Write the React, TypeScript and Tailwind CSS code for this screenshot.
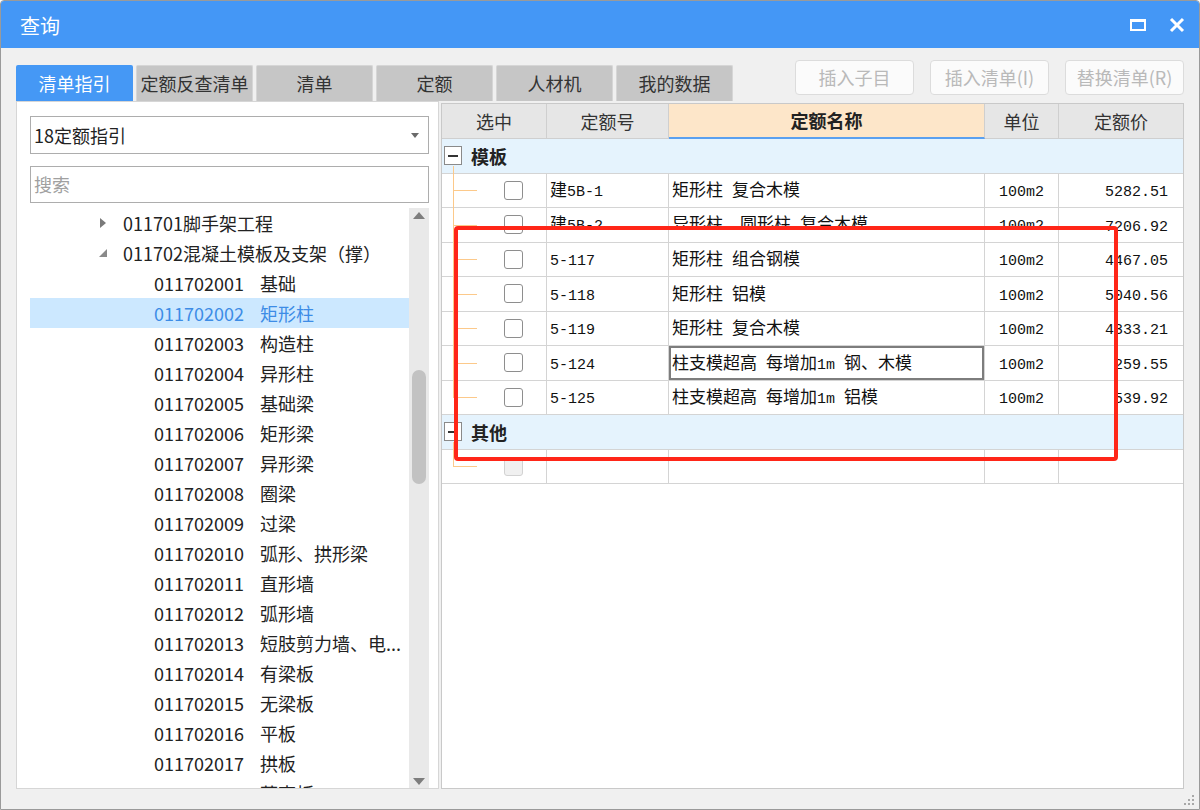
import React from 'react'

// 查询 dialog: 清单指引 tree on the left, 定额 table on the right

const tabs = ['清单指引', '定额反查清单', '清单', '定额', '人材机', '我的数据']

const children = [
  ['011702001', '基础'],
  ['011702002', '矩形柱'],
  ['011702003', '构造柱'],
  ['011702004', '异形柱'],
  ['011702005', '基础梁'],
  ['011702006', '矩形梁'],
  ['011702007', '异形梁'],
  ['011702008', '圈梁'],
  ['011702009', '过梁'],
  ['011702010', '弧形、拱形梁'],
  ['011702011', '直形墙'],
  ['011702012', '弧形墙'],
  ['011702013', '短肢剪力墙、电...'],
  ['011702014', '有梁板'],
  ['011702015', '无梁板'],
  ['011702016', '平板'],
  ['011702017', '拱板'],
  ['011702018', '薄壳板'],
]

type Row = { code: string; name: string; unit: string; price: string; clip?: boolean; focus?: boolean }

const rows: Row[] = [
  { code: '建5B-1', name: '矩形柱 复合木模', unit: '100m2', price: '5282.51' },
  { code: '建5B-2', name: '异形柱、圆形柱 复合木模', unit: '100m2', price: '7206.92', clip: true },
  { code: '5-117', name: '矩形柱 组合钢模', unit: '100m2', price: '4467.05' },
  { code: '5-118', name: '矩形柱 铝模', unit: '100m2', price: '5040.56' },
  { code: '5-119', name: '矩形柱 复合木模', unit: '100m2', price: '4333.21' },
  { code: '5-124', name: '柱支模超高 每增加1m 钢、木模', unit: '100m2', price: '259.55', focus: true },
  { code: '5-125', name: '柱支模超高 每增加1m 铝模', unit: '100m2', price: '539.92' },
]

const cols = 'grid grid-cols-[105px_122px_316px_74px_1fr]'

// SimSun-like cell text: half-width ascii runs in mono, CJK in sans
function Mixed({ text }: { text: string }) {
  const parts = text.split(/([\x20-\x7e]+)/).filter(Boolean)
  return (
    <span className="whitespace-pre">
      {parts.map((p, i) =>
        /^[\x20-\x7e]+$/.test(p) ? (
          <span key={i} className="font-['Liberation_Mono',monospace] text-[15px]">{p}</span>
        ) : (
          <span key={i}>{p}</span>
        )
      )}
    </span>
  )
}

// row 2 is half hidden under the annotation box in the original
function Clip({ on, children }: { on?: boolean; children: React.ReactNode }) {
  if (!on) return <>{children}</>
  return <span className="block h-[17px] overflow-hidden leading-[19px] self-start mt-[5px]">{children}</span>
}

function Checkbox({ disabled }: { disabled?: boolean }) {
  return (
    <span
      className={
        disabled
          ? 'block w-[19px] h-[19px] rounded-[3px] border border-[#d2d2d2] bg-[#f0f0f0]'
          : 'block w-[19px] h-[19px] rounded-[3px] border border-[#8e8e8e] bg-white'
      }
    />
  )
}

function Connector({ last }: { last?: boolean }) {
  return (
    <>
      <span className={`absolute left-[11px] top-0 w-px bg-[#fcc98a] ${last ? 'h-1/2' : 'h-[calc(100%+1px)]'}`} />
      <span className="absolute left-[11px] top-1/2 w-[24px] h-px bg-[#fcc98a]" />
    </>
  )
}

function GroupRow({ label }: { label: string }) {
  return (
    <div className="relative h-[34.5px] shrink-0 flex items-center bg-[#e5f3fd] border-b border-[#d4d4d4]">
      <span className="ml-[2px] w-[18px] h-[19px] border border-[#8a8a8a] bg-white flex items-center justify-center">
        <span className="w-[10px] h-[2px] bg-[#333]" />
      </span>
      <span className="absolute left-[11px] top-[27px] bottom-[-1px] w-px bg-[#fcc98a]" />
      <span className="ml-[9px] text-[18px] font-bold text-[#222] leading-none">{label}</span>
    </div>
  )
}

function DataRow({ r, last }: { r: Row; last?: boolean }) {
  const cell = 'h-full flex items-center border-r border-b border-[#d4d4d4]'
  return (
    <div className={`${cols} h-[34.5px] shrink-0 text-[17px] text-[#111]`}>
      <div className={`${cell} relative pl-[62px]`}>
        <Connector last={last} />
        <Checkbox />
      </div>
      <div className={`${cell} pl-[3px]`}>
        <Clip on={r.clip}><Mixed text={r.code} /></Clip>
      </div>
      <div className={`${cell} pl-[3px] ${r.focus ? 'shadow-[inset_0_0_0_2px_#7d7d7d]' : ''}`}>
        <Clip on={r.clip}><Mixed text={r.name} /></Clip>
      </div>
      <div className={`${cell} pl-[14px]`}>
        <Clip on={r.clip}><Mixed text={r.unit} /></Clip>
      </div>
      <div className="h-full flex items-center justify-end pr-[15px] border-b border-[#d4d4d4]">
        <Mixed text={r.price} />
      </div>
    </div>
  )
}

function TreePanel() {
  return (
    <div className="w-[423px] h-full min-h-0 bg-white border border-[#d6d6d6] pl-[13px] pr-[9px] pt-[14px] flex flex-col">
      <div className="h-[38px] shrink-0 border border-[#adadad] flex items-center justify-between pl-[3px] pr-[9px]">
        <span className="text-[18px] text-[#222]">18定额指引</span>
        <svg width="8" height="5" viewBox="0 0 8 5"><path d="M0 0h8L4 5z" fill="#6a6a6a" /></svg>
      </div>
      <div className="mt-[12px] h-[37px] shrink-0 border border-[#adadad] flex items-center pl-[3px]">
        <span className="text-[18px] text-[#a0a0a0]">搜索</span>
      </div>
      <div className="mt-[5px] flex-1 min-h-0 flex overflow-hidden">
        <div className="flex-1 overflow-hidden text-[18px] text-[#222]">
          <div className="h-[30px] flex items-center">
            <svg className="ml-[70px] w-[6px] h-[10px]" viewBox="0 0 6 10"><path d="M0 0l6 5-6 5z" fill="#7a7a7a" /></svg>
            <span className="ml-[17px]">011701脚手架工程</span>
          </div>
          <div className="h-[30px] flex items-center">
            <svg className="ml-[69px] w-[8px] h-[8px]" viewBox="0 0 8 8"><path d="M8 0v8H0z" fill="#8a8a8a" /></svg>
            <span className="ml-[16px]">011702混凝土模板及支架（撑）</span>
          </div>
          {children.map(([code, name]) => {
            const sel = code === '011702002'
            return (
              <div key={code} className={`h-[30px] flex items-center pl-[124px] whitespace-nowrap ${sel ? 'bg-[#cce8ff] text-[#3d8ce6]' : ''}`}>
                <span className="w-[106px]">{code}</span>
                <span>{name}</span>
              </div>
            )
          })}
        </div>
        <div className="w-[20px] bg-[#e9e9e9] flex flex-col items-center">
          <svg className="mt-[4px] w-[12px] h-[7px]" viewBox="0 0 12 7"><path d="M6 0l6 7H0z" fill="#7d7d7d" /></svg>
          <span className="mt-[151px] w-[14px] h-[114px] rounded-full bg-[#c2c2c2]" />
          <svg className="mt-auto mb-[3px] w-[12px] h-[7px]" viewBox="0 0 12 7"><path d="M0 0h12L6 7z" fill="#7d7d7d" /></svg>
        </div>
      </div>
    </div>
  )
}

function QuotaTable() {
  const head = 'h-full flex items-center justify-center border-r border-b border-[#cfcfcf] bg-[#e6e6e6] text-[#333]'
  return (
    <div className="mt-[2px] w-[743px] h-[686px] bg-white border border-[#c9c9c9] flex flex-col overflow-hidden">
      <div className={`${cols} h-[35px] shrink-0 text-[18px]`}>
        <div className={head}>选中</div>
        <div className={head}>定额号</div>
        <div className="h-full flex items-center justify-center border-r border-[#cfcfcf] border-b-2 border-b-[#5aa0f0] bg-[#fde6c9] font-bold text-[#222]">定额名称</div>
        <div className={head}>单位</div>
        <div className="h-full flex items-center justify-center border-b border-[#cfcfcf] bg-[#e6e6e6] text-[#333]">定额价</div>
      </div>
      <GroupRow label="模板" />
      {rows.map((r, i) => (
        <DataRow key={r.code} r={r} last={i === rows.length - 1} />
      ))}
      <GroupRow label="其他" />
      <div className={`${cols} h-[34.5px] shrink-0`}>
        <div className="relative h-full flex items-center pl-[62px] border-r border-b border-[#d4d4d4]">
          <Connector last />
          <Checkbox disabled />
        </div>
        <div className="h-full border-r border-b border-[#d4d4d4]" />
        <div className="h-full border-r border-b border-[#d4d4d4]" />
        <div className="h-full border-r border-b border-[#d4d4d4]" />
        <div className="h-full border-b border-[#d4d4d4]" />
      </div>
    </div>
  )
}

export default function App() {
  return (
    <div className="relative w-[1200px] h-[810px] border border-[#9a9a9a] rounded-t-[4px] bg-[#f0f0f0] flex flex-col overflow-hidden font-['Noto_Sans_CJK_SC','Microsoft_YaHei',sans-serif]">
      <div className="h-[47px] shrink-0 bg-[#4497f6] flex items-center justify-between pl-[19px] pr-[14px]">
        <span className="text-[20px] text-white mt-[3px]">查询</span>
        <div className="flex items-center gap-[23px]">
          <span className="w-[16px] h-[12px] border-2 border-t-[3px] border-white" />
          <svg width="16" height="16" viewBox="0 0 16 16">
            <path d="M2 2l12 12M14 2L2 14" stroke="#fff" strokeWidth="3" />
          </svg>
        </div>
      </div>

      <div className="flex-1 min-h-0 px-[15px] pt-[12px] pb-[20px] flex flex-col">
        <div className="h-[41px] shrink-0 flex justify-between">
          <div className="self-end flex gap-[3px]">
            {tabs.map((t, i) => (
              <div
                key={t}
                className={`w-[117px] h-[36px] rounded-t-[2px] flex items-center justify-center text-[18px] ${
                  i === 0 ? 'bg-[#4598f5] text-white' : 'bg-[#c6c6c6] text-[#333] border border-b-0 border-[#d6d6d6]'
                }`}
              >
                {t}
              </div>
            ))}
          </div>
          <div className="self-start flex gap-[16px]">
            {['插入子目', '插入清单(I)', '替换清单(R)'].map((b) => (
              <div key={b} className="w-[119px] h-[35px] rounded-[4px] border border-[#dcdcdc] bg-[#fbfbfb] flex items-center justify-center text-[18px] text-[#b9b9b9]">
                {b}
              </div>
            ))}
          </div>
        </div>

        <div className="flex-1 min-h-0 flex gap-[2px]">
          <TreePanel />
          <QuotaTable />
        </div>
      </div>

      {/* red annotation box */}
      <div className="absolute left-[453px] top-[225px] w-[664px] h-[235px] border-[4px] border-[#ff2618] rounded-[4px]" />

      {/* resize grip */}
      <svg className="absolute right-[4px] bottom-[3px]" width="12" height="12" viewBox="0 0 12 12">
        <g fill="#a8a8a8">
          <rect x="9" y="1" width="2" height="2" />
          <rect x="5" y="5" width="2" height="2" />
          <rect x="9" y="5" width="2" height="2" />
          <rect x="1" y="9" width="2" height="2" />
          <rect x="5" y="9" width="2" height="2" />
          <rect x="9" y="9" width="2" height="2" />
        </g>
      </svg>
    </div>
  )
}
